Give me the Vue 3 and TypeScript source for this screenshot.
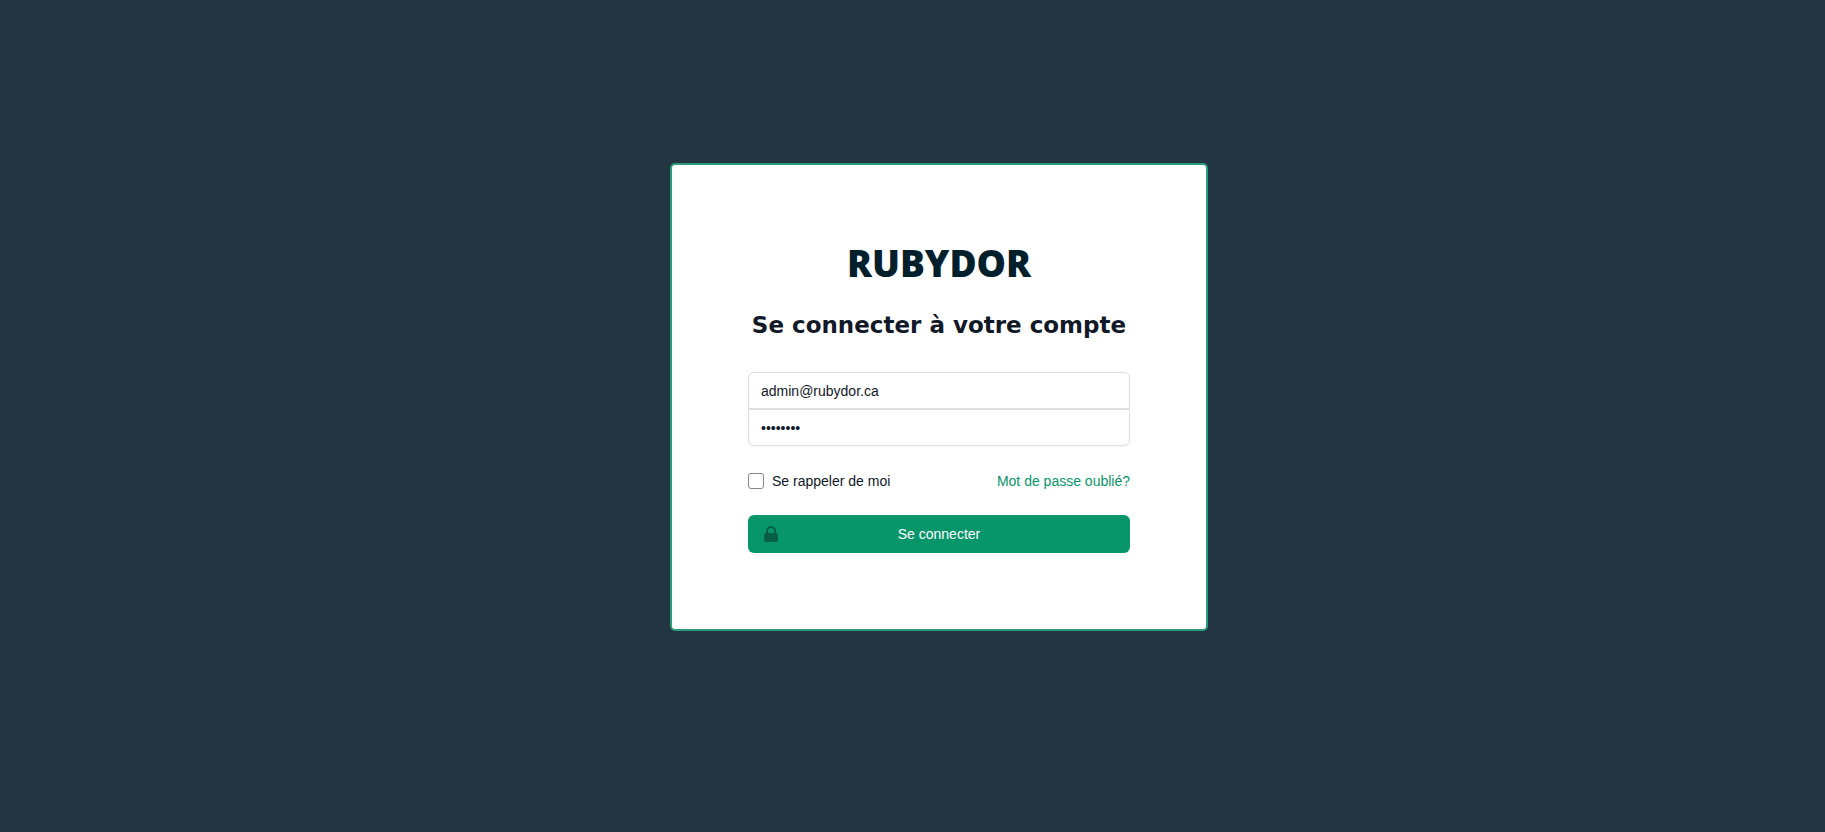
<script setup lang="ts">
import { ref } from 'vue'

const email = ref<string>('admin@rubydor.ca')
const password = ref<string>('password')
const remember = ref<boolean>(false)

function submit(): void {
  password.value = password.value.trim()
}
</script>

<template>
  <main class="page">
    <section class="card">
      <h1 class="brand">RUBYDOR</h1>
      <h2 class="title">Se connecter à votre compte</h2>
      <form class="form" @submit.prevent="submit">
        <div class="fields">
          <input v-model="email" class="field" type="email" aria-label="Adresse e-mail" autocomplete="email" />
          <input v-model="password" class="field" type="password" aria-label="Mot de passe" autocomplete="current-password" />
        </div>
        <div class="options">
          <label class="remember" for="remember">
            <input id="remember" v-model="remember" class="check" type="checkbox" />
            <span>Se rappeler de moi</span>
          </label>
          <a class="forgot" href="#">Mot de passe oublié?</a>
        </div>
        <button class="submit" type="submit">
          <svg class="lock" viewBox="0 0 20 20" aria-hidden="true">
            <path fill-rule="evenodd" clip-rule="evenodd" d="M5 9V7a5 5 0 0110 0v2a2 2 0 012 2v5a2 2 0 01-2 2H5a2 2 0 01-2-2v-5a2 2 0 012-2zm8-2v2H7V7a3 3 0 016 0z" />
          </svg>
          <span>Se connecter</span>
        </button>
      </form>
    </section>
  </main>
</template>

<style>
body {
  margin: 0;
  background: #233443;
}
</style>

<style scoped>
.page {
  box-sizing: border-box;
  min-height: 100vh;
  padding: 0 0 38px 53px;
  display: flex;
  align-items: center;
  justify-content: center;
  background: #233443;
  font-family: "Liberation Sans", Arial, sans-serif;
  font-size: 14px;
  line-height: 20px;
  color: #111827;
}

.card {
  box-sizing: border-box;
  width: 100%;
  max-width: 538px;
  padding: 76px;
  border: 2px solid #2b9a77;
  border-radius: 5px;
  background: #fff;
}

.brand {
  margin: 0;
  font-family: "Open Sans", "Noto Sans", sans-serif;
  font-size: 37px;
  line-height: 44px;
  font-weight: 800;
  text-align: center;
  color: #02202c;
}

.title {
  margin: 24px 0 0;
  font-family: "DejaVu Sans", Verdana, sans-serif;
  font-size: 23px;
  line-height: 32px;
  font-weight: 700;
  text-align: center;
}

.form {
  margin-top: 31px;
}

.fields {
  display: flex;
  flex-direction: column;
  border-radius: 6px;
  box-shadow: 0 1px 2px rgba(0, 0, 0, 0.05);
}

.field {
  box-sizing: border-box;
  width: 100%;
  height: 37px;
  padding: 8px 12px;
  border: 1px solid #dddfe5;
  border-radius: 6px 6px 0 0;
  outline: none;
  background: #fff;
  color: inherit;
  font: inherit;
}

.field + .field {
  border-radius: 0 0 6px 6px;
}

.options {
  margin-top: 25px;
  display: flex;
  align-items: center;
  justify-content: space-between;
}

.remember {
  display: flex;
  align-items: center;
  gap: 8px;
}

.check {
  appearance: none;
  box-sizing: border-box;
  width: 16px;
  height: 16px;
  margin: 0;
  border: 1px solid #858585;
  border-radius: 3px;
  background: #fff;
}

.check:checked {
  background: #07966a;
}

.forgot {
  color: #07966a;
  text-decoration: none;
}

.submit {
  position: relative;
  width: 100%;
  margin-top: 24px;
  padding: 9px 16px;
  border: 0;
  border-radius: 6px;
  background: #07966a;
  color: #fff;
  font: inherit;
  cursor: pointer;
}

.lock {
  position: absolute;
  left: 13px;
  top: 9px;
  width: 20px;
  height: 20px;
  fill: #065f46;
}
</style>
